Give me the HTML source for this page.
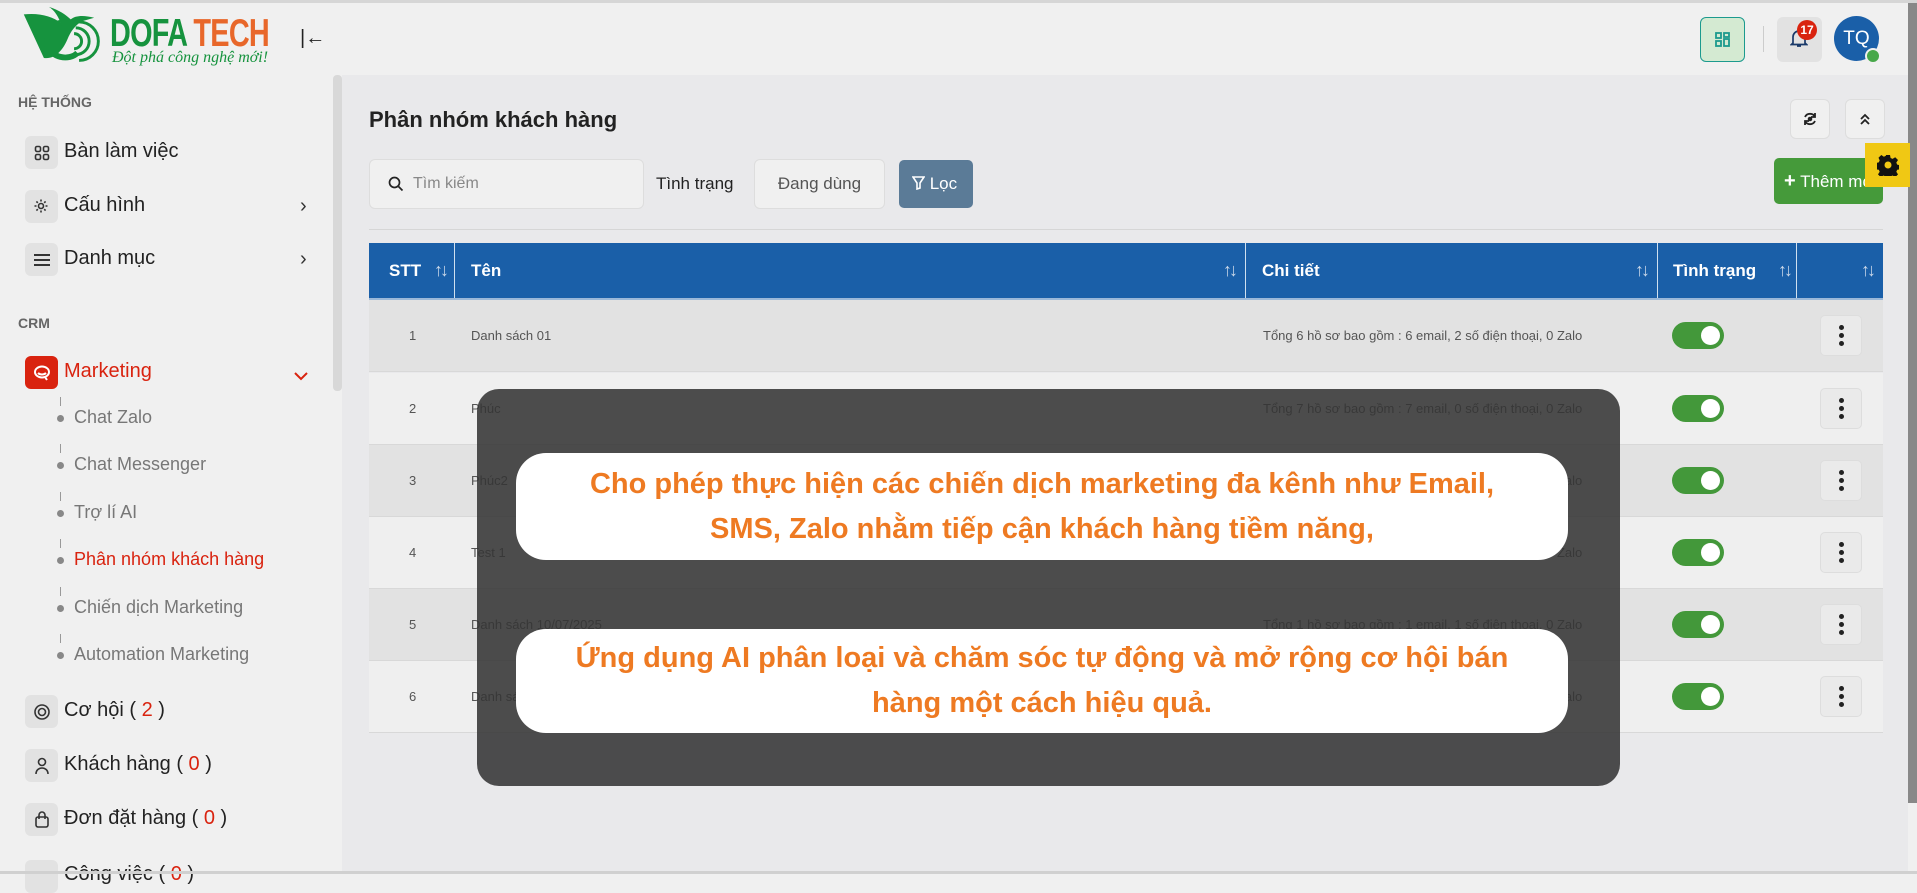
<!DOCTYPE html>
<html><head><meta charset="utf-8">
<style>
*{box-sizing:border-box;margin:0;padding:0}
body{width:1917px;height:874px;overflow:hidden;background:#f0f0f0;font-family:"Liberation Sans",sans-serif;position:relative;color:#222}
.a{position:absolute}
.topline{left:0;top:0;width:1917px;height:3px;background:#d6d6d6}
.side{left:0;top:3px;width:342px;height:871px;background:#f0f0f0}
.main{left:342px;top:75px;width:1566px;height:799px;background:#e9e9eb}
.ib{position:absolute;left:25px;width:33px;height:33px;border-radius:6px;background:#e2e2e2;display:flex;align-items:center;justify-content:center}
.mi{position:absolute;left:64px;font-size:20px;color:#222}
.sec{position:absolute;left:18px;font-size:14px;font-weight:bold;color:#666}
.chev{position:absolute;left:300px;font-size:20px;color:#333}
.sub{position:absolute;left:74px;font-size:18px;color:#777}
.dot{position:absolute;left:57px;width:7px;height:7px;border-radius:50%;background:#888}
.vl{position:absolute;left:60px;width:1px;height:9px;background:#999}
.hd{position:absolute;top:243px;height:55px;background:#1a5fa8;color:#fff;font-weight:bold;font-size:17px;display:flex;align-items:center;border-right:1px solid #cfe0f0}
.sort{position:absolute;right:10px;top:17px;font-size:18px;color:#cbd8e8;font-weight:normal;letter-spacing:-3px}
.row{position:absolute;left:369px;width:1514px;height:72px;border-bottom:1px solid #d8d8d8}
.row span{position:absolute;top:28px;font-size:13px;color:#555}
.tg{position:absolute;left:1303px;top:22px;width:52px;height:27px;border-radius:14px;background:#43983a}
.tg::after{content:"";position:absolute;right:4px;top:4px;width:19px;height:19px;border-radius:50%;background:#fff}
.kb{position:absolute;left:1451px;top:15px;width:42px;height:41px;border:1px solid #ddd;border-radius:5px;background:#eaeaea;display:flex;flex-direction:column;align-items:center;justify-content:center;gap:3px}
.kb i{width:5px;height:5px;border-radius:50%;background:#222;display:block}
.ov{left:477px;top:389px;width:1143px;height:397px;background:rgba(52,52,52,.87);border-radius:22px}
.bub{position:absolute;left:39px;width:1052px;background:#fff;border-radius:30px;color:#ee7a22;font-weight:bold;font-size:29px;line-height:45px;text-align:center;display:flex;align-items:center;justify-content:center}
.sbtn{position:absolute;width:40px;height:40px;border:1px solid #ddd;border-radius:6px;background:#f0f0f0}
</style></head><body>
<div class="a topline"></div>
<div class="a side"></div>
<div class="a main"></div>

<!-- logo -->
<svg class="a" style="left:22px;top:6px" width="84" height="62" viewBox="0 0 100 74">
<path d="M2 10 C20 8 36 12 46 20 C42 10 38 5 32 1 C44 5 52 10 58 16 C64 11 74 11 86 14 L72 18 C64 22 58 30 54 40 C48 54 38 64 26 62" fill="#16933e"/>
<path d="M46 20 C34 22 28 34 30 46 C34 62 56 66 66 56" fill="none" stroke="#16933e" stroke-width="7"/>
<path d="M64 26 a16 16 0 0 1 0 32 M62 33 a9 9 0 0 1 0 18 M68 19 a23 23 0 0 1 0 46" fill="none" stroke="#16933e" stroke-width="3.5"/>
</svg>
<div class="a" style="left:110px;top:12px;font-size:39px;font-weight:bold;letter-spacing:-1px;transform:scaleX(.74);transform-origin:left;white-space:nowrap"><span style="color:#16933e">DOFA</span> <span style="color:#e8672a">TECH</span></div>
<div class="a" style="left:112px;top:49px;font-size:16px;font-style:italic;color:#16933e;font-family:'Liberation Serif',serif;white-space:nowrap">Đột phá công nghệ mới!</div>
<div class="a" style="left:300px;top:27px;font-size:20px;color:#222">|←</div>

<!-- sidebar -->
<div class="sec" style="top:94px">HỆ THỐNG</div>
<div class="ib" style="top:136px"><svg width="16" height="16" viewBox="0 0 16 16" fill="none" stroke="#333" stroke-width="1.6"><rect x="1.5" y="1.5" width="5" height="5" rx="1.5"/><rect x="9.5" y="1.5" width="5" height="5" rx="1.5"/><rect x="1.5" y="9.5" width="5" height="5" rx="1.5"/><rect x="9.5" y="9.5" width="5" height="5" rx="1.5"/></svg></div>
<div class="mi" style="top:140px">Bàn làm việc</div>
<div class="ib" style="top:190px"><svg width="18" height="18" viewBox="0 0 18 18" fill="none" stroke="#333" stroke-width="1.6"><circle cx="8" cy="8" r="2.5"/><path d="M8 1.5v2M8 12.5v2M1.5 8h2M12.5 8h2M3.4 3.4l1.4 1.4M11.2 11.2l1.4 1.4M3.4 12.6l1.4-1.4M11.2 4.8l1.4-1.4"/></svg></div>
<div class="mi" style="top:194px">Cấu hình</div><div class="chev" style="top:195px">›</div>
<div class="ib" style="top:243px"><svg width="18" height="14" viewBox="0 0 18 14" stroke="#333" stroke-width="2"><path d="M1 2h16M1 7h16M1 12h16"/></svg></div>
<div class="mi" style="top:247px">Danh mục</div><div class="chev" style="top:248px">›</div>

<div class="sec" style="top:315px">CRM</div>
<div class="ib" style="top:356px;background:#d9230f"><svg width="18" height="16" viewBox="0 0 18 16" fill="none" stroke="#fff" stroke-width="2"><ellipse cx="9" cy="7" rx="7" ry="5.5"/><path d="M5 8c2 2 6 2 8 0M12 12l2 3"/></svg></div>
<div class="mi" style="top:360px;color:#d9230f">Marketing</div>
<svg class="a" style="left:294px;top:372px" width="14" height="9" viewBox="0 0 14 9"><path d="M1 1l6 6 6-6" fill="none" stroke="#d9230f" stroke-width="2"/></svg>

<div class="vl" style="top:397px"></div><div class="dot" style="top:415px"></div><div class="sub" style="top:407px">Chat Zalo</div>
<div class="vl" style="top:444px"></div><div class="dot" style="top:462px"></div><div class="sub" style="top:454px">Chat Messenger</div>
<div class="vl" style="top:492px"></div><div class="dot" style="top:510px"></div><div class="sub" style="top:502px">Trợ lí AI</div>
<div class="vl" style="top:539px"></div><div class="dot" style="top:557px"></div><div class="sub" style="top:549px;color:#d9230f">Phân nhóm khách hàng</div>
<div class="vl" style="top:587px"></div><div class="dot" style="top:605px"></div><div class="sub" style="top:597px">Chiến dịch Marketing</div>
<div class="vl" style="top:634px"></div><div class="dot" style="top:652px"></div><div class="sub" style="top:644px">Automation Marketing</div>

<div class="ib" style="top:695px"><svg width="18" height="18" viewBox="0 0 18 18" fill="none" stroke="#333" stroke-width="1.6"><circle cx="9" cy="9" r="7"/><circle cx="9" cy="9" r="3.5"/></svg></div>
<div class="mi" style="top:699px">Cơ hội ( <span style="color:#d9230f">2</span> )</div>
<div class="ib" style="top:749px"><svg width="16" height="18" viewBox="0 0 16 18" fill="none" stroke="#333" stroke-width="1.6"><circle cx="8" cy="5" r="3.5"/><path d="M2 17c0-4 3-6 6-6s6 2 6 6"/></svg></div>
<div class="mi" style="top:753px">Khách hàng ( <span style="color:#d9230f">0</span> )</div>
<div class="ib" style="top:803px"><svg width="16" height="18" viewBox="0 0 16 18" fill="none" stroke="#333" stroke-width="1.6"><rect x="2" y="6" width="12" height="10" rx="2"/><path d="M5 8V4a3 3 0 0 1 6 0v4"/></svg></div>
<div class="mi" style="top:807px">Đơn đặt hàng ( <span style="color:#d9230f">0</span> )</div>
<div class="ib" style="top:860px"></div>
<div class="mi" style="top:863px">Công việc ( <span style="color:#d9230f">0</span> )</div>
<div class="a" style="left:333px;top:75px;width:9px;height:316px;background:#d8d8d8;border-radius:4px"></div>
<div class="a" style="left:0;top:871px;width:1917px;height:3px;background:#d0d0d0"></div>

<!-- header right -->
<div class="a" style="left:1700px;top:17px;width:45px;height:45px;border:1px solid #1c9a8e;border-radius:6px;background:#d4ead2;display:flex;align-items:center;justify-content:center"><svg width="16" height="16" viewBox="0 0 16 16" fill="none" stroke="#1c9a8e" stroke-width="1.8"><rect x="1" y="1" width="5" height="5"/><rect x="9" y="1" width="5" height="4"/><rect x="1" y="9" width="5" height="5"/><rect x="9" y="7" width="5" height="7"/></svg></div>
<div class="a" style="left:1763px;top:26px;width:1px;height:26px;background:#ccc"></div>
<div class="a" style="left:1777px;top:17px;width:45px;height:45px;border-radius:6px;background:#e2e2e2"></div>
<svg class="a" style="left:1790px;top:28px" width="18" height="20" viewBox="0 0 18 20" fill="none" stroke="#1a3a6a" stroke-width="1.7"><path d="M3 15V9a6 6 0 0 1 12 0v6l1.5 1.5h-15z M7 18h4"/></svg>
<div class="a" style="left:1797px;top:20px;width:20px;height:20px;border-radius:50%;background:#d9230f;color:#fff;font-size:12px;font-weight:bold;text-align:center;line-height:20px">17</div>
<div class="a" style="left:1834px;top:16px;width:45px;height:45px;border-radius:50%;background:#1a5fa8;color:#fff;font-size:19px;text-align:center;line-height:45px">TQ</div>
<div class="a" style="left:1865px;top:48px;width:16px;height:16px;border-radius:50%;background:#48a84a;border:2px solid #f0f0f0"></div>
<div class="a" style="left:1908px;top:3px;width:9px;height:800px;background:#888"></div>

<!-- page head -->
<div class="a" style="left:369px;top:107px;font-size:22px;font-weight:bold;color:#222">Phân nhóm khách hàng</div>
<div class="sbtn" style="left:1790px;top:99px"><svg style="margin:11px" width="16" height="16" viewBox="0 0 16 16" fill="none" stroke="#222" stroke-width="1.8"><path d="M3 6a5.5 5.5 0 0 1 10 0M13 10a5.5 5.5 0 0 1-10 0M13 2v4h-4M3 14v-4h4"/><circle cx="8" cy="8" r="1.4" fill="#222"/></svg></div>
<div class="sbtn" style="left:1845px;top:99px"><svg style="margin:12px" width="14" height="14" viewBox="0 0 14 14" fill="none" stroke="#222" stroke-width="1.8"><path d="M3 7l4-4 4 4M3 12l4-4 4 4"/></svg></div>

<div class="a" style="left:369px;top:159px;width:275px;height:50px;border:1px solid #ddd;border-radius:6px;background:#f0f0f0"></div>
<svg class="a" style="left:388px;top:176px" width="16" height="16" viewBox="0 0 16 16" fill="none" stroke="#222" stroke-width="1.7"><circle cx="6.5" cy="6.5" r="5"/><path d="M10.5 10.5l4 4"/></svg>
<div class="a" style="left:413px;top:175px;font-size:16px;color:#888">Tìm kiếm</div>
<div class="a" style="left:656px;top:174px;font-size:17px;color:#222">Tình trạng</div>
<div class="a" style="left:754px;top:159px;width:131px;height:50px;border:1px solid #ddd;border-radius:6px;background:#f0f0f0;font-size:17px;color:#555;text-align:center;line-height:48px">Đang dùng</div>
<div class="a" style="left:899px;top:160px;width:74px;height:48px;border-radius:5px;background:#5b7b97;color:#fff;font-size:17px;line-height:48px;padding-left:13px">
<svg width="13" height="14" viewBox="0 0 13 14" fill="none" stroke="#fff" stroke-width="1.6" style="vertical-align:-1px"><path d="M1 1h11L8 7v5l-3 1V7z"/></svg> Lọc</div>
<div class="a" style="left:1774px;top:158px;width:109px;height:46px;border-radius:5px;background:#459a3a;color:#fff;font-size:17px;line-height:46px;padding-left:10px;white-space:nowrap;overflow:hidden"><b style="font-size:20px">+</b> Thêm mới</div>
<div class="a" style="left:1865px;top:143px;width:45px;height:44px;background:#f0c814"></div>
<svg class="a" style="left:1877px;top:154px" width="22" height="22" viewBox="0 0 22 22"><path fill="#111" d="M9 1h4l.6 3 2 .9 2.6-1.7 2.8 2.8-1.7 2.6.9 2 3 .6v4l-3 .6-.9 2 1.7 2.6-2.8 2.8-2.6-1.7-2 .9-.6 3H9l-.6-3-2-.9-2.6 1.7-2.8-2.8 1.7-2.6-.9-2-3-.6V9l3-.6.9-2L1.5 3.8 4.3 1l2.6 1.7 2-.9z"/><circle cx="11" cy="11" r="3.5" fill="#f0c814"/></svg>
<div class="a" style="left:369px;top:229px;width:1514px;height:1px;background:#d6d6d6"></div>

<!-- table header -->
<div class="hd" style="left:369px;width:86px;padding-left:20px">STT<span class="sort" style="right:8px">↑↓</span></div>
<div class="hd" style="left:455px;width:791px;padding-left:16px">Tên<span class="sort">↑↓</span></div>
<div class="hd" style="left:1246px;width:412px;padding-left:16px">Chi tiết<span class="sort">↑↓</span></div>
<div class="hd" style="left:1658px;width:139px;padding-left:15px">Tình trạng<span class="sort" style="right:6px">↑↓</span></div>
<div class="hd" style="left:1797px;width:86px;border-right:none"><span class="sort">↑↓</span></div>
<div class="a" style="left:369px;top:298px;width:1514px;height:2px;background:#9bb8d8"></div>

<div class="row" style="top:300px;background:#e2e2e2"><span style="left:40px">1</span><span style="left:102px">Danh sách 01</span><span style="left:894px">Tổng 6 hồ sơ bao gồm : 6 email, 2 số điện thoại, 0 Zalo</span><div class="tg"></div><div class="kb"><i></i><i></i><i></i></div></div>
<div class="row" style="top:373px;background:#efefef"><span style="left:40px">2</span><span style="left:102px">Phúc</span><span style="left:894px">Tổng 7 hồ sơ bao gồm : 7 email, 0 số điện thoại, 0 Zalo</span><div class="tg"></div><div class="kb"><i></i><i></i><i></i></div></div>
<div class="row" style="top:445px;background:#e2e2e2"><span style="left:40px">3</span><span style="left:102px">Phúc2</span><span style="left:894px">Tổng 7 hồ sơ bao gồm : 7 email, 0 số điện thoại, 0 Zalo</span><div class="tg"></div><div class="kb"><i></i><i></i><i></i></div></div>
<div class="row" style="top:517px;background:#efefef"><span style="left:40px">4</span><span style="left:102px">Test 1</span><span style="left:894px">Tổng 2 hồ sơ bao gồm : 2 email, 0 số điện thoại, 0 Zalo</span><div class="tg"></div><div class="kb"><i></i><i></i><i></i></div></div>
<div class="row" style="top:589px;background:#e2e2e2"><span style="left:40px">5</span><span style="left:102px">Danh sách 10/07/2025</span><span style="left:894px">Tổng 1 hồ sơ bao gồm : 1 email, 1 số điện thoại, 0 Zalo</span><div class="tg"></div><div class="kb"><i></i><i></i><i></i></div></div>
<div class="row" style="top:661px;background:#efefef"><span style="left:40px">6</span><span style="left:102px">Danh sách 6</span><span style="left:894px">Tổng 3 hồ sơ bao gồm : 3 email, 0 số điện thoại, 0 Zalo</span><div class="tg"></div><div class="kb"><i></i><i></i><i></i></div></div>

<!-- overlay -->
<div class="a ov">
<div class="bub" style="top:64px;height:107px">Cho phép thực hiện các chiến dịch marketing đa kênh như Email,<br>SMS, Zalo nhằm tiếp cận khách hàng tiềm năng,</div>
<div class="bub" style="top:240px;height:104px">Ứng dụng AI phân loại và chăm sóc tự động và mở rộng cơ hội bán<br>hàng một cách hiệu quả.</div>
</div>
</body></html>
